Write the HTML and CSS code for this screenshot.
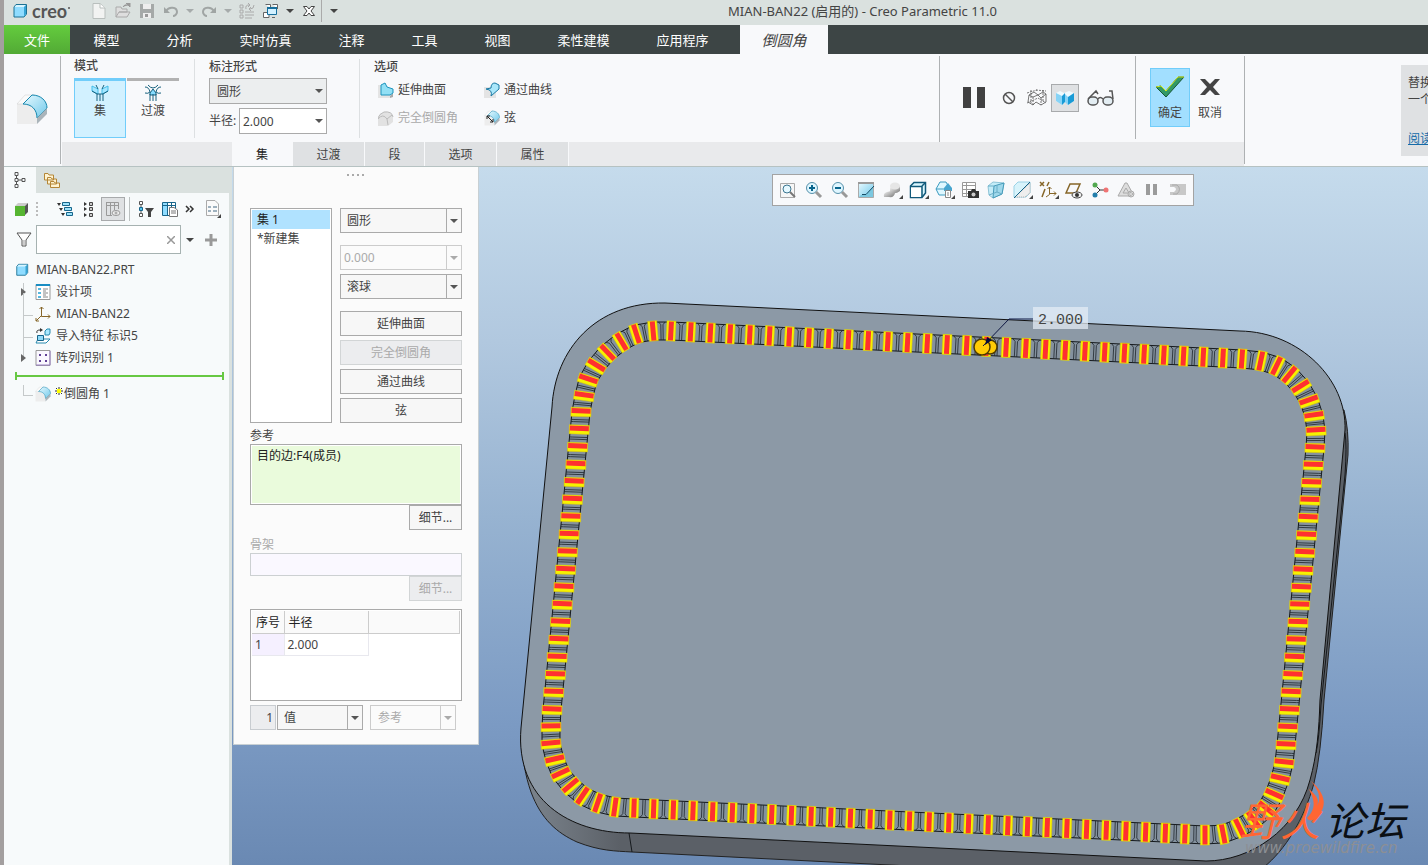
FILE: index.html
```html
<!DOCTYPE html>
<html lang="zh-CN">
	<head>
		<meta charset="UTF-8" />
		<meta name="viewport" content="width=device-width, initial-scale=1.0" />
		<title>MIAN-BAN22 (启用的) - Creo Parametric 11.0</title>
		<link rel="stylesheet" href="styles.css">
	</head>
	<body>
		<svg class="defs" aria-hidden="true">
			<defs>
				<linearGradient id="blue" x1="0" y1="0" x2="1" y2="1"><stop offset="0" stop-color="#e8faff" /><stop offset="1" stop-color="#6fc8ea" /></linearGradient>
				<linearGradient id="grey" x1="0" y1="0" x2="1" y2="1"><stop offset="0" stop-color="#fff" /><stop offset="1" stop-color="#777" /></linearGradient>
				<symbol id="cube" viewBox="0 0 16 16"><path d="M2 4 4 1.500H14.500V11L12 14H2z" fill="#8fdcff" stroke="#1b7193" /><path d="M2.500 4 4.500 2H14L12 4z" fill="#d8f5ff" /><path d="M12 4V13.500L14 11V2z" fill="#36a4d5" /></symbol>
				<symbol id="fillet" viewBox="0 0 32 32"><path d="M1 11H8C17 12 21 18 21 25V31H1z" fill="#ededed" /><path d="M1 11 9 2H18L8 11z" fill="#fafafa" stroke="#ccc" stroke-width=".5" /><path d="M7 11 16 2C25 2 31 8 31 15L21 25C21 17 16 11 7 11z" fill="url(#blue)" stroke="#1687ae" /><path d="M21 25 31 15V21L21 31z" fill="#aab4ba" /></symbol>
			</defs>
		</svg>

		<header class="titlebar">
			<div class="brand">
				<svg width="16" height="16"><use href="#cube" /></svg>
				<span>creo</span><i></i>
			</div>
			<div class="quick">
				<button aria-label="新建"><svg width="16" height="16"><path d="M2 .5H9L14 5V15.500H2z" fill="#f2f3f2" stroke="#b9bfbd" /><path d="M9 1V5H14" fill="#fff" stroke="#b9bfbd" /></svg></button>
				<button aria-label="打开"><svg width="16" height="16"><path d="M1 14V4H6L7 6H12V9H4L1 14H12L15 9H4" fill="#dedede" stroke="#aaa" /><path d="M8 4Q9 1 13 2M11 0H15V4z" fill="#999" stroke="#999" /></svg></button>
				<button aria-label="保存"><svg width="16" height="16"><path d="M1 1H15V15H1z" fill="#a5a9a8" /><path d="M4 1H12V6H4zM4 10H12V15H4z" fill="#eee" /><path d="M6 11H9V14H6z" fill="#999" /></svg></button>
				<button aria-label="撤消"><svg width="16" height="16"><path d="M1 4V10H7z" fill="#a0a5a4" /><path d="M3 8C6 3 14 4 14 9C14 11 12 13 10 13" fill="none" stroke="#a0a5a4" stroke-width="2" /></svg></button>
				<button class="drop dim" aria-label="撤消列表"></button>
				<button aria-label="重做"><svg width="16" height="16"><path d="M15 4V10H9z" fill="#a0a5a4" /><path d="M13 8C10 3 2 4 2 9C2 11 4 13 6 13" fill="none" stroke="#a0a5a4" stroke-width="2" /></svg></button>
				<button class="drop dim" aria-label="重做列表"></button>
				<button aria-label="重新生成"><svg width="16" height="16" fill="none" stroke="#aaa"><path d="M1 2H4V5H1zM1 7H4V10H1zM1 12H4V15H1zM6 9H15M6 12H15M6 15H13M7 6Q6 2 10 2M9 0 11 2 9 4M15 2Q15 6 11 6M12 4 10 6 12 8" /></svg></button>
				<button aria-label="窗口"><svg width="16" height="16"><path d="M2.500 1.500H7.500V5M9.500 1.500H14.500V6M.5 9.500H6V14.500H.5zM9 14.500H12" fill="#fff" stroke="#666" /><path d="M4.500 5.500H13.500V11.500H4.500z" fill="#d2f1ff" stroke="#176f9d" /><path d="M4 5H14" stroke="#176f9d" stroke-width="2" /></svg></button>
				<button class="drop" aria-label="窗口列表"></button>
				<button aria-label="关闭窗口"><svg width="12" height="12"><path d="M.5 1.500H4L6 4 8 1.500H11.500L8 6 11.500 10.500H8L6 8 4 10.500H.5L4 6z" fill="#fff" stroke="#444" /></svg></button>
				<button class="drop more" aria-label="自定义"></button>
			</div>
			<h1>MIAN-BAN22 (启用的) - Creo Parametric 11.0</h1>
		</header>

		<nav class="tabs">
			<button class="file">文件</button>
			<button>模型</button>
			<button>分析</button>
			<button>实时仿真</button>
			<button>注释</button>
			<button>工具</button>
			<button>视图</button>
			<button>柔性建模</button>
			<button>应用程序</button>
			<button class="active">倒圆角</button>
		</nav>

		<section class="ribbon">
			<div class="feature"><svg width="32" height="32"><use href="#fillet" /></svg></div>
			<div class="ribbon-body">
				<div class="groups">
					<div class="group mode">
						<h2>模式</h2>
						<div class="mode-buttons">
							<button class="on"><svg width="18" height="18" fill="none" stroke="#16617e"><path d="M1 2 7 5V10L1 7zM17 2 11 5V10L17 7z" fill="#a5e6ff" stroke="#42bde9" /><path d="M1 7 6 10V17M17 7 12 10V17M9 10V17M6 10H12M7 5 5 1M11 5 13 1" /></svg>集</button>
							<button><svg width="18" height="18" fill="none" stroke="#16617e"><path d="M6 9 9 5 12 9V11H6z" fill="#86dcff" /><path d="M1 3Q5 3 6 8Q4 10 1 9M17 3Q13 3 12 8Q14 10 17 9M4 1Q9 7 14 1M6 17V10M9 17V10M12 17V10" /></svg>过渡</button>
						</div>
					</div>
					<div class="group dims">
						<h2>标注形式</h2>
						<span class="pick shaded"><select aria-label="标注形式"><option>圆形</option></select></span>
						<div class="field"><label for="radius">半径:</label><span class="pick"><select id="radius"><option>2.000</option></select></span></div>
					</div>
					<div class="group opts">
						<h2>选项</h2>
						<div class="opt-grid">
							<button><svg width="16" height="16"><path d="M0 3H8L12 8V16H0z" fill="#e4e4e4" /><path d="M12 14 15 11V15L12 16z" fill="#aaa" /><path d="M3 3 7 1 9 5 15 7V11L12 13H3z" fill="#92e0f5" stroke="#1d94bd" /></svg>延伸曲面</button>
							<button><svg width="16" height="16"><path d="M0 5H7L12 10V16H0z" fill="#e4e4e4" /><path d="M2 7 7 6Q7 1 11 1L15 3V7L7 14Q9 8 2 7z" fill="#aae7fa" stroke="#1979a4" /></svg>通过曲线</button>
							<button disabled><svg width="16" height="16"><path d="M0 8Q1 4 6 2Q14 1 15 7V12L10 16H0z" fill="#e2e2e2" /><path d="M0 8Q1 4 6 2Q14 1 15 7M0 9Q5 3 9 9L10 15M9 9 14 5" fill="none" stroke="#bbb" /></svg>完全倒圆角</button>
							<button><svg width="16" height="16"><use href="#fillet" /><path d="M3 6 9 12M3 9V6H6M9 9V12H6" fill="none" stroke="#222" /></svg>弦</button>
						</div>
					</div>
					<div class="group preview">
						<button aria-label="暂停"><svg width="24" height="24"><path d="M1 1H9V22H1zM15 1H23V22H15z" fill="#414141" /></svg></button>
						<button aria-label="无预览"><svg width="14" height="14" fill="none" stroke="#555" stroke-width="1.500"><circle cx="7" cy="7" r="5.500" /><path d="M3 3 11 11" /></svg></button>
						<button aria-label="分离"><svg width="20" height="18" fill="none" stroke="#555" stroke-width=".8"><path d="M2 6 7 3 11 6 16 3 19 5V13L14 16 9 13 6 16 1 13zM2 6 6 8 11 6 14 9 19 5" /><path d="M4 1V14M6 8V16M14 9V16M16 1V13M0 14 11 9 19 14M0 4 10 1M9 1 19 2" stroke-dasharray="2 1" /></svg></button>
						<button class="pressed" aria-label="连接"><svg width="20" height="16"><path d="M1 3 5 1 9 3 14 1 19 3V11L13 15V9L7 15 1 11z" fill="#eefaff" /><path d="M1 3 7 6V15L1 11zM10 4 13 7V15L10 12z" fill="#86d3f6" /><path d="M7 6 10 3V12L7 15zM13 7 19 3V11L13 15z" fill="#199bd6" /></svg></button>
						<button aria-label="特征预览"><svg width="28" height="20" fill="#e3edf2" stroke="#555" stroke-width="1.500"><rect x="2" y="9" width="10" height="8" rx="4" /><rect x="17" y="9" width="10" height="8" rx="4" /><path d="M2 11 10 3 12 6M12 11Q14 8 17 11M27 11 26 3 23 3" fill="none" /></svg></button>
					</div>
					<div class="group confirm">
						<button class="ok"><svg width="30" height="24"><path d="M1 12 6 11 11 16 23 2H29L11 22z" fill="#329966" stroke="#155637" /><path d="M1 12 6 11 11 16 23 2H29" fill="none" stroke="#d8ee20" /></svg>确定</button>
						<button><svg width="22" height="24"><path d="M1 4H6L11 9 16 4H21L14 12 21 20H16L11 15 6 20H1L8 12z" fill="#444" /></svg>取消</button>
					</div>
				</div>
				<nav class="subtabs">
					<button class="active">集</button>
					<button>过渡</button>
					<button>段</button>
					<button>选项</button>
					<button>属性</button>
				</nav>
			</div>
			<aside class="notice">
				<div><p>替换<br>一个</p><a href="#">阅读</a></div>
			</aside>
		</section>

		<main class="workspace">
			<aside class="sidebar">
				<div class="side-tabs">
					<button class="active" aria-label="模型树"><svg width="12" height="16" fill="none" stroke="#555"><path d="M1 .5H4V3.500H1zM1 6.500H4V9.500H1zM1 12.500H4V15.500H1zM8 6.500H11V9.500H8zM2.500 4V6M2.500 10V12M4 8H8" /></svg></button>
					<button aria-label="文件夹浏览器"><svg width="16" height="16" fill="#fff3d1" stroke="#b48637"><path d="M.5 1.500H4L5 3H9.500V8H.5zM3.500 5.500H7L8 7H12.500V12H3.500zM6.500 9.500H10L11 11H15.500V15.500H6.500z" /></svg></button>
				</div>
				<div class="side-tools">
					<button aria-label="模型"><svg width="14" height="14"><path d="M0 4 3 1H13L10 4z" fill="#ccc" /><path d="M10 4 13 1V10L10 13z" fill="#555" /><path d="M0 4H10V14H0z" fill="#56b531" /></svg></button>
					<i class="grip"></i>
					<button aria-label="展开"><svg width="16" height="16"><path d="M0 2H4L2 5zM2 7H6L4 10zM4 12H8L6 15z" fill="#333" /><path d="M5.500 1.500H12.500V4.500H5.500zM7.500 6.500H14.500V9.500H7.500zM9.500 11.500H15.500V14.500H9.500z" fill="#9de2fa" stroke="#17658a" /></svg></button>
					<button aria-label="折叠"><svg width="10" height="16"><path d="M0 1 3 3 0 5zM0 6 3 8 0 10zM0 12 3 14 0 16z" fill="#333" /><path d="M5.500 1.500H8.500V4.500H5.500zM5.500 6.500H8.500V9.500H5.500zM5.500 12.500H8.500V15.500H5.500z" fill="#ccc" stroke="#444" /></svg></button>
					<button class="pressed" aria-label="树列"><svg width="16" height="16" fill="none" stroke="#999"><path d="M1.500 1.500H13.500V8M1.500 1V14.500H7M1 4.500H13M5.500 2V14M9.500 2V9" /><ellipse cx="11" cy="12" rx="4" ry="2.500" fill="#eee" /><circle cx="11" cy="12" r="1" /></svg></button>
					<i class="rule"></i>
					<button aria-label="树过滤器"><svg width="16" height="16"><path d="M1.500.5H4.500V3.500H1.500zM1.500 12.500H4.500V15.500H1.500z" fill="#fff" stroke="#555" /><path d="M1.500 6.500H4.500V9.500H1.500z" fill="#55c3ee" stroke="#17658a" /><path d="M3 4V6M3 10V12" stroke="#555" /><path d="M7 7H16L13 11V16H10V11z" fill="#444" /></svg></button>
					<button aria-label="树设置"><svg width="16" height="16"><path d="M.5 1.500H13.500V14.500H.5z" fill="#fff" stroke="#17658a" /><path d="M1 2H5V14H1z" fill="#8fdcff" /><path d="M.5 4.500H13M5.500 1V15M9.500 1V14" stroke="#17658a" /><path d="M7.500 6.500H12L15.500 9V15.500H7.500zM9 10H14M9 12H14" fill="#fff" stroke="#777" /></svg></button>
					<button class="chevrons" aria-label="更多"><svg width="10" height="8" fill="none" stroke="#333" stroke-width="1.500"><path d="M1 1 4 4 1 7M5 1 8 4 5 7" /></svg></button>
					<button aria-label="显示设置"><svg width="18" height="18"><path d="M2.500.5H11L14.500 4V15.500H2.500z" fill="#fafafa" stroke="#aaa" /><path d="M4 7H7M9 7H13M4 11H7M9 11H13" stroke="#8099aa" stroke-width="1.500" /><path d="M17 14V18H13z" fill="#444" /></svg></button>
				</div>
				<div class="filter">
					<svg width="18" height="18"><path d="M2 2H16L11 9V15H7V9z" fill="#fff" stroke="#555" /><path d="M9 9V14" stroke="#999" /></svg>
					<div class="search"><input type="text" aria-label="搜索"><button aria-label="清除"><svg width="8" height="8"><path d="M0 0 8 8M8 0 0 8" stroke="#999" stroke-width="1.500" /></svg></button></div>
					<button class="drop" aria-label="搜索选项"></button>
					<button aria-label="添加"><svg width="12" height="12"><path d="M0 6H12M6 0V12" stroke="#999" stroke-width="3" /></svg></button>
				</div>
				<div class="root"><svg width="14" height="14"><use href="#cube" /></svg>MIAN-BAN22.PRT</div>
				<ul class="tree">
					<li class="parent"><svg width="16" height="16"><path d="M1 .5H15V15.500H1z" fill="#fff" stroke="#999" /><path d="M1 1H15" stroke="#198dc3" stroke-width="2" /><path d="M3 4H6V6H3zM3 8H6V10H3zM3 12H6V14H3z" fill="#55b7df" /><path d="M8 5H13M8 7H11M8 9H13M8 11H11M8 13H13" stroke="#888" /></svg>设计项</li>
					<li><svg width="16" height="16" fill="none" stroke="#866629"><path d="M6.500 1V10.500H15M6 10 1 15M4.500 3 6.500 1 8.500 3M13 8.500 15 10.500 13 12.500M1 12V15H4" /></svg>MIAN-BAN22</li>
					<li><svg width="16" height="16"><path d="M10 3 12 1H15V5L14 7H10z" fill="#a9e8ff" stroke="#2789ae" /><path d="M2 5Q1 2 5 2" fill="none" stroke="#333" /><path d="M5 0 8 2 5 4z" fill="#333" /><path d="M1 15 3 11H15L11 15z" fill="#fff" stroke="#2789ae" /><path d="M2.500 7.500H8.500V12.500H2.500z" fill="#91dbfa" stroke="#17658a" /></svg>导入特征 标识5</li>
					<li class="parent"><svg width="16" height="16"><path d="M1 .5H15V15.500H1z" fill="#faf8ff" stroke="#999" /><path d="M15 1V15H1" stroke="#9a80c4" fill="none" /><path d="M4 4H6V6H4zM10 4H12V6H10zM4 10H6V12H4zM10 10H12V12H10z" fill="#614197" /></svg>阵列识别 1</li>
				</ul>
				<div class="insert-here"></div>
				<ul class="tree pending">
					<li><svg width="16" height="16"><use href="#fillet" /></svg><svg class="star" width="8" height="8"><path d="M4 0V8M0 4H8M1 1 7 7M7 1 1 7" stroke="#333" /><path d="M2 2H6V6H2z" fill="#ff0" /></svg>倒圆角 1</li>
				</ul>
			</aside>

			<section class="viewport">
				<svg class="model" viewBox="232 167 1196 698" preserveAspectRatio="xMinYMin slice">
					<defs>
						<linearGradient id="wall" x1="0" x2="1"><stop offset="0" stop-color="#7d868f" /><stop offset=".12" stop-color="#5b6067" /><stop offset="1" stop-color="#5b6067" /></linearGradient>
					</defs>
					<path class="wall" d="M521 740C523 760 525 775 531 792C541 819 557 833 577 842C600 851 615 851 632 852L930 867H1264C1285 850 1304 820 1314 783Q1321 755 1324 700L1348 455Q1349 430 1344 410L1230 400 600 600z" />
					<path class="edge" d="M629 833 632 852M1345 433Q1347 445 1345 475L1321 705Q1319 740 1316 753" />
					<path class="face" d="M552 407C555 350 595 302 665 303L1240 331C1300 332 1347 380 1345 430L1320 700C1319 730 1317 755 1310 780C1297 830 1250 861 1206 861L630 833C570 833 515 800 521 728z" />
					<g id="teeth"></g>
					<g class="handle"><circle cx="990" cy="347" r="7" /><circle cx="982" cy="347" r="8" /></g>
					<path class="leader" d="M1033 319H1009L983 346" />
					<path class="arrow" d="M985 345 987 337 992 340z" />
					<rect class="dim-box" x="1033" y="307" width="55" height="22" />
					<text class="dim-text" x="1038" y="324">2.000</text>
					<g class="watermark">
						<text class="mark-fire" x="1240" y="836">野火</text>
						<path d="M1311 781C1326 794 1328 807 1316 818Q1310 823 1307 818C1318 807 1313 798 1309 789C1318 797 1319 800 1317 806C1322 797 1318 790 1311 781z" />
						<text class="mark-forum" x="1325" y="836">论坛</text>
						<text class="mark-url" x="1245" y="853">www.proewildfire.cn</text>
					</g>
				</svg>

				<div class="view-tools">
					<button aria-label="重新调整"><svg width="18" height="18"><path d="M1.500 2.500H15.500V16.500H1.500z" fill="#f6f6f6" stroke="#aaa" /><circle cx="8" cy="8" r="4" fill="#e5f8ff" stroke="#3c7691" /><path d="M11 11 16 16" stroke="#777" stroke-width="2" /></svg></button>
					<button aria-label="放大"><svg width="18" height="18"><circle cx="7" cy="7" r="5.500" fill="#dff6ff" stroke="#5590aa" /><path d="M4 7H10M7 4V10" stroke="#08658d" stroke-width="2" /><path d="M11 11 16 16" stroke="#999" stroke-width="3" /></svg></button>
					<button aria-label="缩小"><svg width="18" height="18"><circle cx="7" cy="7" r="5.500" fill="#dff6ff" stroke="#5590aa" /><path d="M4 7H10" stroke="#08658d" stroke-width="2" /><path d="M11 11 16 16" stroke="#999" stroke-width="3" /></svg></button>
					<button aria-label="重画"><svg width="18" height="18"><path d="M1.500 1.500H16.500V16.500H1.500z" fill="url(#blue)" stroke="#aaa" /><path d="M1 2H17" stroke="#999" stroke-width="2" /><path d="M4 14H9L16 6V16H2z" fill="#7cc8e0" /><path d="M5 13.500H9L17 5" fill="none" stroke="#164d66" /></svg></button>
					<button aria-label="渲染选项" class="corner"><svg width="18" height="18"><path d="M1 16Q0 12 4 11L12 9V12Q11 17 6 16z" fill="url(#grey)" /><path d="M7 5Q12 10 17 5V10Q12 14 7 11z" fill="url(#grey)" /><ellipse cx="12" cy="5" rx="5" ry="3.500" fill="#e6e6e6" /></svg></button>
					<button aria-label="显示样式" class="corner"><svg width="18" height="18"><path d="M1.500 5 5 1.500H16.500V12L13 16.500H1.500z" fill="#d9f6ff" stroke="#11597a" stroke-width="1.500" /><path d="M2 6H12V16H2z" fill="#fff" /><path d="M1 5.500H13M13 5V16M13 5 16 2" stroke="#11597a" stroke-width="1.500" /></svg></button>
					<button aria-label="已保存方向" class="corner"><svg width="18" height="18"><path d="M1 8 5 1H11L15 8 12 14H4z" fill="#def7ff" stroke="#3a9abf" /><path d="M1 8H10" stroke="#3a9abf" /><path d="M9 7 13 2 17 7V10H9z" fill="#46a5cf" /><path d="M10.500 9.500H15.500V16.500H10.500zM12 12H14M12 14H14" fill="#fff" stroke="#888" /></svg></button>
					<button aria-label="视图管理器"><svg width="18" height="18"><path d="M1.500 1.500H14.500V15.500H1.500zM1 4.500H14M1 8.500H14M1 12.500H9M5.500 2V15" fill="#fff" stroke="#999" /><path d="M7 10H10L11 8H14L15 10H18V17H7z" fill="#333" /><circle cx="12.500" cy="13.500" r="2" fill="#ccc" /></svg></button>
					<button aria-label="透视图"><svg width="18" height="18"><path d="M1 5 6 1 17 2 15 13 6 17 2 14z" fill="#c4ecf8" stroke="#8ec4d7" /><path d="M7 5 17 2 15 13 6 17z" fill="#9fd8eb" stroke="#459ab9" /><path d="M1 5 7 5M2 14 10 11 15 13M10 11V4" fill="none" stroke="#69aec8" /></svg></button>
					<button aria-label="截面" class="corner"><svg width="18" height="18"><path d="M1 5 5 1H17V12L13 16H1z" fill="#d8f3fb" stroke="#9bd2e6" /><path d="M2 16 17 2V12L12 16z" fill="#eee" stroke="#aaa" stroke-dasharray="1 1" /><path d="M1 17 17 1" stroke="#17658a" /></svg></button>
					<button aria-label="基准显示" class="corner"><svg width="18" height="18" fill="none" stroke="#866629"><path d="M1 1 5 5M5 1 1 5M10 1 8 5M6 8 3 16" stroke-width="1.500" /><path d="M10.500 6V13.500L7 16M10 12.500H17M8.500 8 10.500 6 12.500 8M15 10.500 17 12.500 15 14.500" /></svg></button>
					<button aria-label="注释显示"><svg width="18" height="18"><path d="M1 12 5 3H15L11 12z" fill="none" stroke="#866629" stroke-width="1.500" /><ellipse cx="12" cy="14" rx="5" ry="3" fill="#eee" stroke="#444" /><circle cx="12" cy="14" r="2" fill="#333" /></svg></button>
					<button aria-label="旋转中心"><svg width="18" height="18"><path d="M4 4 9 9H15M9 9 4 14" stroke="#333" fill="none" /><circle cx="4" cy="4" r="2.500" fill="#53a951" /><circle cx="15" cy="9" r="2.500" fill="#ef7474" /><circle cx="4" cy="14" r="2.500" fill="#247eab" /></svg></button>
					<button aria-label="仿真" disabled><svg width="18" height="18" fill="#ddd" stroke="#aaa"><path d="M1 15 8 2H10L16 13 12 15zM6 12 9 7 12 12z" /><circle cx="14" cy="13" r="3" /><path d="M13 11 16 13 13 15z" fill="#fff" /></svg></button>
					<button aria-label="暂停仿真" disabled><svg width="14" height="14"><path d="M1 1H5V12H1zM8 1H12V12H8z" fill="#9b9b9b" /></svg></button>
					<button aria-label="仿真结果" disabled><svg width="18" height="14"><path d="M1 1H17V12H1V9H5Q9 6 5 4H1z" fill="#c8c8c8" /><path d="M3 2H8Q13 6 8 11H4" stroke="#aaa" fill="none" /></svg></button>
				</div>

				<form class="panel">
					<div class="handle-dots"></div>
					<div class="sets">
						<ul class="set-list"><li class="selected">集 1</li><li>*新建集</li></ul>
						<div class="set-options">
							<span class="pick split"><select aria-label="截面形状"><option>圆形</option></select></span>
							<span class="pick split off apart"><select aria-label="圆锥参数" disabled><option>0.000</option></select></span>
							<span class="pick split"><select aria-label="创建方法"><option>滚球</option></select></span>
							<button type="button" class="apart">延伸曲面</button>
							<button type="button" disabled>完全倒圆角</button>
							<button type="button">通过曲线</button>
							<button type="button">弦</button>
						</div>
					</div>
					<label class="caption" for="refs">参考</label>
					<textarea id="refs" class="refs" readonly>目的边:F4(成员)</textarea>
					<button type="button" class="details">细节...</button>
					<label class="caption faded" for="spine">骨架</label>
					<input id="spine" class="spine" type="text" disabled>
					<button type="button" class="details" disabled>细节...</button>
					<div class="radii">
						<table>
							<thead><tr><th>序号</th><th>半径</th><th></th></tr></thead>
							<tbody><tr><td>1</td><td>2.000</td></tr></tbody>
						</table>
					</div>
					<div class="value-row">
						<input type="text" value="1" aria-label="半径数" readonly>
						<span class="pick split"><select aria-label="值类型"><option>值</option></select></span>
						<span class="pick split off last"><select aria-label="参考类型" disabled><option>参考</option></select></span>
					</div>
				</form>
			</section>
		</main>

		<script src="script.js"></script>
	</body>
</html>
```
FILE: styles.css
```css
* {
	box-sizing: border-box;
}

body {
	margin: 0;
	height: 100vh;
	display: flex;
	flex-direction: column;
	overflow: hidden;
	border-left: 4px solid #a39f9f;
	background: #f8f9fb;
	color: #444;
	font: 12px/16px "Noto Sans", "Noto Sans CJK SC", sans-serif;
}

button,
input,
select,
textarea {
	font: inherit;
	color: inherit;
	margin: 0;
	border-radius: 0;
}

button {
	border: none;
	background: none;
	padding: 0;
	display: flex;
	align-items: center;
	justify-content: center;
}

h1,
h2,
p,
ul {
	margin: 0;
	padding: 0;
	list-style: none;
}

svg {
	flex: none;
}

.defs {
	position: absolute;
	width: 0;
	height: 0;
}

/* title bar */
.titlebar {
	flex: none;
	display: flex;
	align-items: center;
	height: 25px;
	padding: 0 0 3px 8px;
	background: #dae1df;
}

.brand {
	display: flex;
	align-items: center;
	width: 75px;
}

.brand span {
	margin-left: 4px;
	font: bold 18px/22px Lato, sans-serif;
	color: #555;
}

.brand i {
	width: 2px;
	height: 2px;
	margin: -6px 0 0 1px;
	background: #777;
}

.quick {
	display: flex;
	height: 100%;
	width: 641px;
	align-items: center;
}

.quick button {
	width: 24px;
	height: 22px;
}

.quick .drop {
	width: 14px;
}

.drop::before {
	content: "";
	border: 4px solid transparent;
	border-top-color: #444;
	border-bottom: 0;
}

.dim::before {
	border-top-color: #a6abab;
}

.quick .more {
	width: 24px;
	border-left: 1px solid #aaa;
}

.titlebar h1 {
	font-size: 13px;
	font-weight: normal;
	white-space: nowrap;
}

/* main tabs */
.tabs {
	flex: none;
	display: flex;
	height: 29px;
	background: #3d4545;
	color: #fff;
	font-size: 13px;
}

.tabs button {
	width: 73px;
	white-space: nowrap;
}

.tabs button:nth-child(4),
.tabs button:nth-child(8),
.tabs button:nth-child(9) {
	width: 99px;
}

.tabs .file {
	width: 66px;
	background: linear-gradient(#64cc3e, #52aa35);
}

.tabs .active {
	width: 88px;
	margin-left: 8px;
	background: #f8f9fb;
	color: #444;
	font-size: 15px;
	font-style: italic;
}

/* ribbon */
.ribbon {
	flex: none;
	display: flex;
	height: 113px;
	border-bottom: 1px solid #b6c2c2;
}

.feature {
	width: 57px;
	margin: 2px 0;
	padding: 37px 0 0 12px;
	border-right: 1px solid #b0b3b5;
}

.ribbon-body {
	flex: 1;
	display: flex;
	flex-direction: column;
}

.groups {
	display: flex;
	flex: 1;
}

.group {
	padding-left: 13px;
}

.group h2 {
	height: 24px;
	padding-top: 4px;
	font-size: 12px;
	font-weight: 500;
	line-height: 16px;
}

.mode {
	width: 133px;
}

.mode-buttons {
	display: flex;
	gap: 1px;
}

.mode-buttons button {
	width: 52px;
	height: 60px;
	flex-direction: column;
	justify-content: flex-start;
	gap: 1px;
	padding-top: 3px;
	border-top: 3px solid #b2b2b2;
}

.mode-buttons .on {
	border: 1px solid #71cdfa;
	border-top-width: 3px;
	background: #d2f1ff;
}

.dims,
.opts {
	border-left: 1px solid #dde0e2;
	margin: 5px 0 4px;
	padding-left: 14px;
}

.dims h2,
.opts h2 {
	height: 19px;
	padding: 0;
}

.dims {
	width: 165px;
}

.pick {
	position: relative;
	display: block;
	height: 26px;
}

.pick select {
	appearance: none;
	display: block;
	width: 100%;
	height: 100%;
	padding: 1px 20px 0 3px;
	border: 1px solid #aaa;
	background: #fff;
	opacity: 1;
}

.pick::after {
	content: "";
	position: absolute;
	right: 4px;
	top: 11px;
	border: 4px solid transparent;
	border-top-color: #555;
	border-bottom: 0;
	pointer-events: none;
}

.dims > .pick {
	width: 118px;
}

.pick.shaded select {
	padding-left: 7px;
	background: #eceeef;
}

.field {
	display: flex;
	align-items: center;
	margin-top: 4px;
}

.field label {
	width: 30px;
	white-space: nowrap;
}

.field .pick {
	width: 88px;
}

.opts {
	flex: 1;
}

.opt-grid {
	display: grid;
	grid-template-columns: 106px 106px;
	row-gap: 4px;
	padding-left: 4px;
}

.opt-grid button {
	height: 24px;
	gap: 4px;
	justify-content: flex-start;
	white-space: nowrap;
}

button:disabled {
	color: #aaa;
}

.preview,
.confirm {
	display: flex;
	align-items: center;
	margin-top: 2px;
	border-left: 1px solid #aeb1b3;
}

.preview {
	width: 196px;
	padding: 0 20px 2px;
}

.preview button {
	width: 28px;
	height: 28px;
	flex: none;
}

.preview button:first-child {
	margin-right: 7px;
}

.preview button:last-child {
	margin-left: 7px;
}

.pressed {
	border: 1px solid #a8aaac;
	background: #dfe1e3;
}

.confirm {
	width: 109px;
	margin-bottom: 3px;
	padding-left: 14px;
}

.confirm button {
	width: 40px;
	height: 59px;
	flex-direction: column;
	gap: 6px;
}

.confirm .ok {
	border: 1px solid #71cdfa;
	background: #a2dfff;
}

.subtabs {
	display: flex;
	height: 24px;
	margin-left: 1px;
	padding-left: 170px;
	background: #e9eaec;
}

.subtabs button {
	width: 72px;
	padding-top: 2px;
	border-right: 1px solid #f8f9fb;
	background: #dfe1e3;
}

.subtabs button:nth-child(3) {
	width: 60px;
}

.subtabs button.active {
	width: 61px;
	background: #f8f9fb;
	color: #222;
}

.notice {
	width: 184px;
	display: flex;
	justify-content: flex-end;
	margin: 2px 0;
	border-left: 1px solid #aeb1b3;
}

.notice div {
	width: 27px;
	height: 91px;
	margin-top: 9px;
	padding: 9px 0 0 7px;
	overflow: hidden;
	background: #dfe1e3;
	white-space: nowrap;
}

.notice p {
	height: 57px;
	line-height: 17px;
}

.notice a {
	display: block;
	color: #156ba8;
}

/* model tree */
.workspace {
	flex: 1;
	min-height: 0;
	display: flex;
}

.sidebar {
	width: 228px;
	flex: none;
	border-right: 3px solid #dae1df;
	background: #f7fafb;
}

.side-tabs {
	display: flex;
	height: 26px;
	background: #dae1df;
}

.side-tabs button {
	width: 32px;
}

.side-tabs .active {
	background: #f7fafb;
}

.side-tools {
	display: flex;
	align-items: center;
	height: 32px;
	padding-left: 6px;
}

.side-tools button {
	width: 24px;
	height: 24px;
}

.grip {
	width: 2px;
	height: 14px;
	margin: 0 15px 0 2px;
	background: repeating-linear-gradient(#bbb 0 2px, transparent 2px 4px);
}

.rule {
	width: 1px;
	height: 24px;
	margin: 0 4px;
	background: #bbc0c0;
}

.side-tools .chevrons {
	width: 16px;
}

.side-tools .chevrons + button {
	margin-left: 3px;
}

.filter {
	display: flex;
	align-items: center;
	padding-left: 11px;
}

.search {
	display: flex;
	width: 145px;
	height: 29px;
	margin-left: 3px;
	border: 1px solid #a6b2b1;
	background: #fff;
}

.search input {
	flex: 1;
	min-width: 0;
	border: none;
	background: none;
}

.search button {
	width: 19px;
}

.filter .drop {
	width: 18px;
}

.filter > button:last-child {
	width: 24px;
}

.root {
	display: flex;
	align-items: center;
	gap: 7px;
	height: 22px;
	margin-top: 5px;
	padding-left: 11px;
}

.tree li {
	position: relative;
	display: flex;
	align-items: center;
	gap: 5px;
	height: 22px;
	padding-left: 31px;
}

.tree li::before {
	content: "";
	position: absolute;
	left: 19px;
	top: -10px;
	width: 9px;
	height: 22px;
	border: solid #c5c9ca;
	border-width: 0 0 1px 1px;
}

.tree .parent::before {
	width: 1px;
	border-bottom: none;
}

.tree li:first-child::before {
	top: 2px;
	height: 10px;
}

.tree .parent::after {
	content: "";
	position: absolute;
	left: 17px;
	top: 7px;
	border: 4px solid transparent;
	border-left: 5px solid #666;
	border-right: 0;
}

.insert-here {
	height: 8px;
	margin: 3px 5px 0 11px;
	border: solid #67c843;
	border-width: 0 2px;
	background: linear-gradient(transparent 3px, #67c843 3px 5px, transparent 5px);
}

.pending {
	margin-top: 3px;
}

.pending li {
	gap: 1px;
}

.star {
	margin: 0 0 6px 3px;
}

/* graphics area */
.viewport {
	flex: 1;
	position: relative;
	min-width: 0;
	overflow: hidden;
	background: linear-gradient(#c5dbec, #b1c8df 25%, #97b3d1 50%, #7b9ac3 80%, #6a89b3);
}

.model {
	position: absolute;
	inset: 0;
	width: 100%;
	height: 100%;
}

.wall {
	fill: url(#wall);
	stroke: #222;
}

.face {
	fill: #8c99a6;
	stroke: #111;
}

.edge,
.rail {
	fill: none;
	stroke: #15191d;
}

.band {
	fill: none;
	stroke: #84919e;
	stroke-width: 18px;
}

.gap {
	fill: none;
	stroke: #1d242b;
	stroke-width: .8px;
}

.tooth {
	fill: #f6f200;
	stroke: #e0c800;
	stroke-width: .5px;
}

.tooth-core {
	fill: #ff3030;
}

.handle circle {
	fill: #ffcb05;
	stroke: #4d3a00;
	stroke-width: 1.5px;
}

.leader {
	fill: none;
	stroke: #0d1642;
}

.arrow {
	fill: #04093c;
}

.dim-box {
	fill: #e4ecf4;
	fill-opacity: .75;
}

.dim-text {
	font: 15px "Liberation Mono", monospace;
	fill: #444;
}

.watermark {
	fill: #ff6633;
}

.mark-fire,
.mark-forum {
	font: italic 400 40px "Noto Sans CJK SC", sans-serif;
}

.mark-forum {
	fill: #0b0f14;
}

.mark-url {
	font: italic 15px "DejaVu Sans", sans-serif;
	fill: #8c8f94;
}

.view-tools {
	position: absolute;
	left: 540px;
	top: 7px;
	display: flex;
	height: 32px;
	padding: 0 2px;
	border: 1px solid #a3a3a3;
	background: #f8f9fb;
}

.view-tools button {
	position: relative;
	width: 26px;
	height: 30px;
}

.corner::after {
	content: "";
	position: absolute;
	right: 2px;
	bottom: 6px;
	border: 2px solid #444;
	border-top-color: transparent;
	border-left-color: transparent;
}

/* sets panel */
.panel {
	position: absolute;
	left: 1px;
	top: 0;
	width: 246px;
	padding: 7px 16px 14px;
	border: 1px solid #c8d0d4;
	border-top: none;
	background: #fbfbfb;
}

.handle-dots {
	width: 18px;
	height: 2px;
	margin: 0 auto 32px;
	background: repeating-linear-gradient(90deg, #aaa 0 2px, transparent 2px 5px);
}

.sets {
	display: flex;
	gap: 8px;
}

.set-list {
	width: 82px;
	padding: 1px;
	border: 1px solid #aaa;
	background: #fff;
}

.set-list li {
	height: 19px;
	padding-left: 5px;
	line-height: 19px;
}

.set-list .selected {
	background: #b0e2ff;
	color: #222;
}

.set-options {
	flex: 1;
	display: flex;
	flex-direction: column;
	gap: 4px;
}

.set-options > * {
	height: 25px;
}

.apart {
	margin-top: 8px;
}

.set-options button,
.details {
	border: 1px solid #aaa;
	background: #f7f7f7;
}

.panel button:disabled {
	border-color: #d2d5d6;
	background: #ecedef;
}

.split select {
	padding: 0 20px 0 6px;
	background: linear-gradient(90deg, transparent calc(100% - 15px), #aaa calc(100% - 15px) calc(100% - 14px), transparent calc(100% - 14px)) #f7f7f7;
}

.off select {
	padding-left: 3px;
	border-color: #ccc;
	background: linear-gradient(90deg, transparent calc(100% - 15px), #ccc calc(100% - 15px) calc(100% - 14px), transparent calc(100% - 14px)) #fbfbfb;
	color: #aaa;
}

.off::after {
	border-top-color: #aaa;
}

.last select {
	padding-left: 7px;
}

.caption {
	display: block;
	height: 21px;
	padding-top: 5px;
}

.faded {
	height: 23px;
	padding-top: 7px;
	color: #aaa;
}

.refs {
	display: block;
	width: 100%;
	height: 61px;
	padding: 3px 6px;
	border: 1px solid #aaa;
	box-shadow: inset 0 0 0 1px #fff;
	background: #eafbdc;
	color: #222;
	resize: none;
}

.details {
	width: 53px;
	height: 25px;
	margin-left: auto;
}

.spine {
	display: block;
	width: 100%;
	height: 23px;
	border: 1px solid #ccd0d2;
	background: #faf8ff;
}

.radii {
	height: 92px;
	margin: 8px 0 4px;
	padding: 1px;
	border: 1px solid #aaa;
	background: #fff;
}

.radii table {
	width: 100%;
	table-layout: fixed;
	border-collapse: collapse;
}

.radii th,
.radii td {
	height: 22px;
	padding: 2px 3px 0;
	border: solid #e8e8ee;
	border-width: 0 1px 1px 0;
	text-align: left;
	font-weight: normal;
	overflow: hidden;
	white-space: nowrap;
}

.radii th {
	padding: 2px 4px 0;
	border-color: #ccc;
	background: #fafafa;
	color: #222;
}

.radii th:first-child {
	width: 32px;
	padding-right: 0;
}

.radii th:nth-child(2) {
	width: 84px;
}

.radii td:first-child {
	background: #f5f0ff;
}

.value-row {
	display: flex;
}

.value-row input {
	width: 26px;
	height: 25px;
	margin-right: 1px;
	padding: 0 2px;
	border: 1px solid #c8ccd0;
	background: #ecedef;
	text-align: right;
}

.value-row .pick {
	width: 86px;
	height: 25px;
}

.value-row .last {
	margin-left: 7px;
}
```
FILE: script.js
```js
const teethLayer = document.querySelector("#teeth");

// [x, y, angle of the long axis in degrees]
const topLeft = [
	[584, 396, 8], [588, 380, 18], [596, 366, 31], [607, 353, 46],
	[621, 342, 59], [636, 334, 72], [653, 331, 85],
];
const topRight = [
	[1242, 359, 94], [1261, 361, 102], [1277, 366, 116], [1290, 375, 130],
	[1301, 387, 148], [1309, 401, 161], [1314, 416, 172], [1316, 431, 177],
];
const bottomRight = [
	[1284, 763, 186], [1280, 779, 193], [1274, 795, 204], [1266, 809, 219],
	[1253, 820, 233], [1239, 828, 244], [1223, 834, 259], [1205, 835, 270],
];
const bottomLeft = [
	[615, 807, 278], [598, 803, 289], [583, 796, 304], [571, 786, 320],
	[561, 774, 335], [555, 760, 347], [551, 744, 355], [551, 727, 359],
];

function straight(x1, y1, x2, y2, gaps, angle) {
	const list = [];
	for (let i = 0; i <= gaps; i++) {
		list.push([x1 + ((x2 - x1) * i) / gaps, y1 + ((y2 - y1) * i) / gaps, angle]);
	}
	return list;
}

const teeth = [
	...topLeft,
	...straight(671, 331, 1223, 358, 28, 93),
	...topRight,
	...straight(1315, 448, 1286, 745, 17, 182),
	...bottomRight,
	...straight(1185, 834, 634, 808, 28, 272),
	...bottomLeft,
	...straight(552, 710, 581, 412, 17, 362),
];

function end(tooth, length) {
	const rad = (tooth[2] * Math.PI) / 180;
	return [tooth[0] + Math.cos(rad) * length, tooth[1] + Math.sin(rad) * length];
}

function add(name, attrs) {
	const el = document.createElementNS("http://www.w3.org/2000/svg", name);
	for (const key in attrs) el.setAttribute(key, attrs[key]);
	teethLayer.appendChild(el);
}

add("polygon", { class: "band", points: teeth.map((t) => end(t, 0)).join(" ") });
add("polygon", { class: "rail", points: teeth.map((t) => end(t, -9)).join(" ") });
add("polygon", { class: "rail", points: teeth.map((t) => end(t, 9)).join(" ") });

// thin walls between the cut-outs
teeth.forEach((tooth, i) => {
	const next = teeth[(i + 1) % teeth.length];
	const mid = (length) => {
		const a = end(tooth, length);
		const b = end(next, length);
		return [(a[0] + b[0]) / 2, (a[1] + b[1]) / 2];
	};
	const [ox, oy] = mid(-9);
	const [ix, iy] = mid(9);
	const dx = (next[0] - tooth[0]) * 0.06;
	const dy = (next[1] - tooth[1]) * 0.06;
	const flare = Math.abs(dx) > Math.abs(dy) ? 3 : 1;
	const kx = (ix - ox) * 0.15;
	const ky = (iy - oy) * 0.15;
	add("path", {
		class: "gap",
		d: `M${ox - dx * flare} ${oy - dy * flare}L${ox - dx + kx} ${oy - dy + ky}L${ix - dx} ${iy - dy}M${ox + dx * flare} ${oy + dy * flare}L${ox + dx + kx} ${oy + dy + ky}L${ix + dx} ${iy + dy}`,
	});
});

teeth.forEach((tooth) => {
	const turn = `translate(${tooth[0]} ${tooth[1]}) rotate(${tooth[2]})`;
	// the lit side of each cut-out faces up the screen
	const shift = -Math.cos((tooth[2] * Math.PI) / 180) * 1.2;
	add("rect", { class: "tooth", x: -10, y: -4.5, width: 20, height: 9, transform: turn });
	add("rect", { class: "tooth-core", x: -9.5, y: -2.5 + shift, width: 19, height: 5, transform: turn });
});
```
